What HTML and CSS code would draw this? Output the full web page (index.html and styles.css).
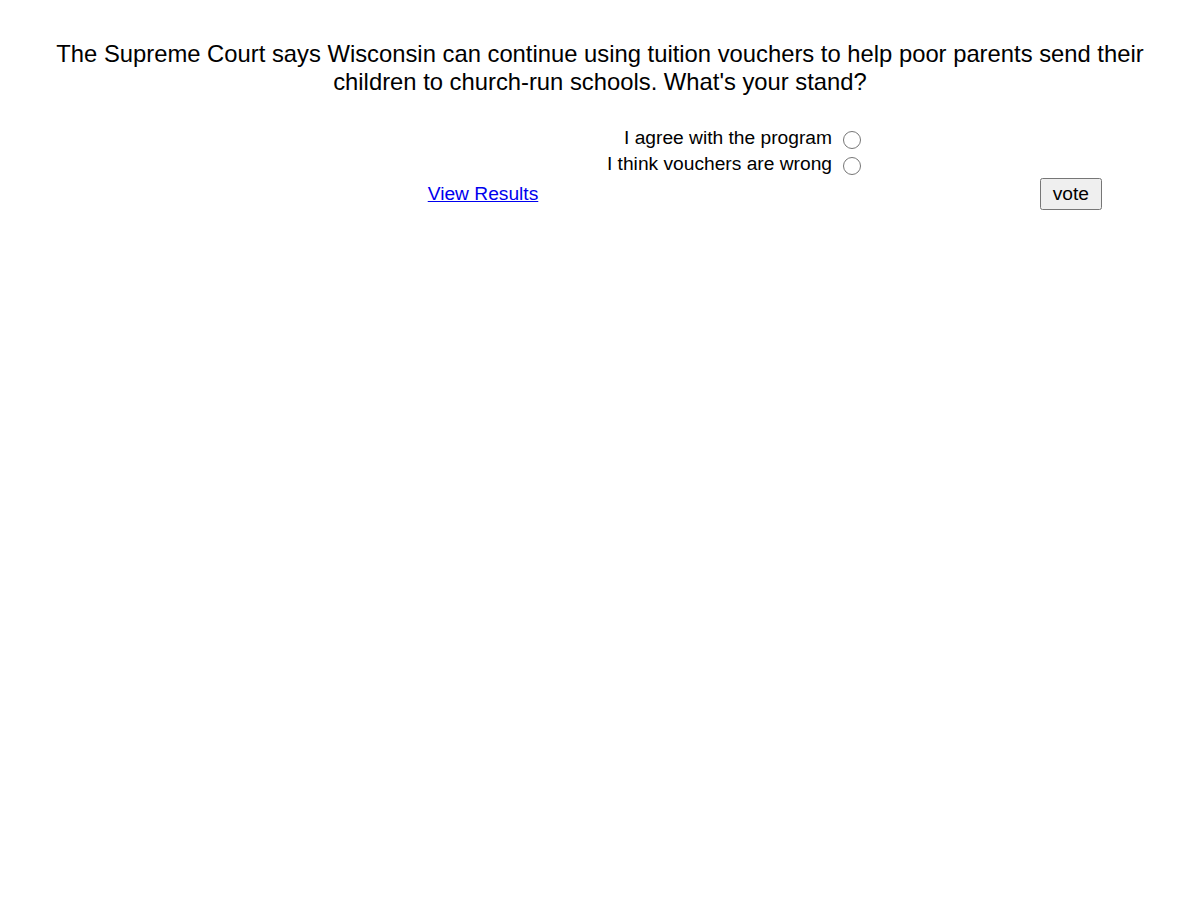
FILE: index.html
```html
<!DOCTYPE html>
<html>
<head>
<meta charset="utf-8">
<link rel="stylesheet" href="styles.css">
</head>
<body>
<form class="poll">
  <h1 class="question">The Supreme Court says Wisconsin can continue using tuition vouchers to help poor parents send their children to church-run schools. What's your stand?</h1>
  <div class="grid">
    <label class="opt-label" for="o1">I agree with the program</label>
    <div class="opt-radio"><input type="radio" id="o1" name="vote" class="radio"></div>
    <label class="opt-label" for="o2">I think vouchers are wrong</label>
    <div class="opt-radio"><input type="radio" id="o2" name="vote" class="radio"></div>
    <div class="results"><a href="#" class="link">View Results</a></div>
    <div class="submit"><button type="button" class="btn">vote</button></div>
  </div>
</form>
</body>
</html>
```
FILE: styles.css
```css
html, body {
  margin: 0;
  padding: 0;
  background: #fff;
}
body {
  font-family: "Liberation Sans", Arial, sans-serif;
  color: #000;
}
.poll {
  padding-top: 40px;
}
.question {
  margin: 0 0 29px;
  padding: 0 40px;
  font-size: 23.8px;
  font-weight: normal;
  line-height: 28px;
  text-align: center;
}
.grid {
  display: grid;
  grid-template-columns: 706px 266px;
  margin-left: 130px;
  font-size: 19.2px;
  line-height: 26px;
}
.opt-label {
  text-align: right;
  padding-right: 4px;
}
.opt-radio {
  display: flex;
  align-items: center;
}
.radio {
  width: 18px;
  height: 18px;
  margin: 4px 0 0 7px;
}
.results {
  text-align: center;
  padding-top: 4px;
}
.link {
  color: #0000ee;
}
.submit {
  text-align: right;
  padding-top: 1px;
}
.btn {
  font-family: "Liberation Sans", Arial, sans-serif;
  font-size: 19.2px;
  height: 32px;
  padding: 1px 11px;
  margin-top: 0;
}
```
